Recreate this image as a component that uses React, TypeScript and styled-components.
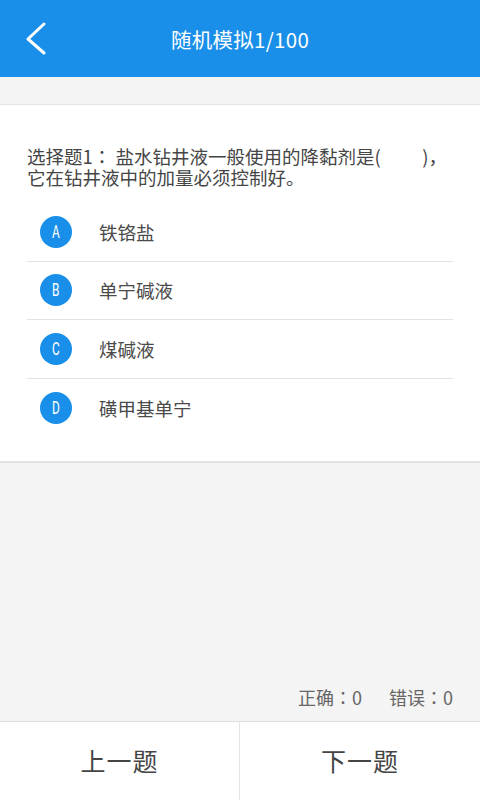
import React from "react";
import styled, { createGlobalStyle } from "styled-components";

const GlobalStyle = createGlobalStyle`
  html, body { margin: 0; padding: 0; background: #f4f4f4; }
  body { font-family: "Noto Sans CJK SC", "Noto Sans", Roboto, sans-serif; }
  * { box-sizing: border-box; }
`;

const Page = styled.div`
  width: 480px;
  height: 800px;
  display: flex;
  flex-direction: column;
  background: #f4f4f4;
  overflow: hidden;
`;

const Header = styled.header`
  height: 77px;
  flex: none;
  background: #1a8fe9;
  display: flex;
  align-items: center;
  justify-content: center;
  position: relative;
`;

const BackButton = styled.button`
  position: absolute;
  left: 20px;
  top: 18px;
  width: 32px;
  height: 42px;
  border: 0;
  padding: 0;
  background: transparent;
  display: flex;
  align-items: center;
  justify-content: center;
`;

const Title = styled.h1`
  margin: 0;
  color: #ffffff;
  font-size: 20.5px;
  font-weight: 400;
  letter-spacing: 0.3px;
  margin-top: 1px;
`;

const Spacer = styled.div`
  height: 27px;
  flex: none;
`;

const Card = styled.section`
  background: #ffffff;
  border-top: 1px solid #e4e4e4;
  border-bottom: 2px solid #e2e2e2;
  padding: 41px 27px 24px;
  flex: none;
`;

const Question = styled.p`
  margin: 0 0 15px;
  font-size: 18.5px;
  line-height: 21px;
  color: #454545;
`;

const Colon = styled.span`
  font-family: "Noto Sans CJK TC", "Noto Sans CJK SC", sans-serif;
`;

const OptionList = styled.ul`
  list-style: none;
  margin: 0;
  padding: 0;
`;

const OptionRow = styled.li<{ $last?: boolean }>`
  height: ${(p) => (p.$last ? "58px" : "58.5px")};
  display: flex;
  align-items: center;
  padding-left: 13px;
  gap: 27px;
  border-bottom: ${(p) => (p.$last ? "none" : "1px solid #e3e3e3")};
`;

const Badge = styled.span`
  width: 32px;
  height: 32px;
  border-radius: 50%;
  background: #1a8fe9;
  color: #ffffff;
  display: flex;
  align-items: center;
  justify-content: center;
  flex: none;
`;

const BadgeLetter = styled.span`
  display: inline-block;
  font-family: Roboto, "Liberation Sans", sans-serif;
  font-size: 18px;
  line-height: 1;
  transform: scaleX(0.66);
`;

const OptionText = styled.span`
  font-size: 18.5px;
  color: #4a4a4a;
`;

const Filler = styled.div`
  flex: 1;
  display: flex;
  flex-direction: column;
  justify-content: flex-end;
  padding: 0 27px 13px;
`;

const Stats = styled.div`
  display: flex;
  justify-content: flex-end;
  gap: 27px;
  font-size: 18px;
  color: #666666;
  line-height: 22px;
`;

const BottomBar = styled.nav`
  height: 79px;
  flex: none;
  background: #ffffff;
  border-top: 1px solid #dedede;
  display: grid;
  grid-template-columns: 1fr 1fr;
`;

const NavButton = styled.button<{ $divider?: boolean }>`
  border: 0;
  background: transparent;
  font-family: "Noto Sans CJK SC", sans-serif;
  font-size: 25px;
  color: #454545;
  border-right: ${(p) => (p.$divider ? "1px solid #e4e4e4" : "none")};
  padding: 0 0 2px;
  letter-spacing: 1px;
`;

const options = [
  { key: "A", text: "铁铬盐" },
  { key: "B", text: "单宁碱液" },
  { key: "C", text: "煤碱液" },
  { key: "D", text: "磺甲基单宁" },
];

const gap = "\u00a0".repeat(10);

export default function App() {
  return (
    <Page>
      <GlobalStyle />
      <Header>
        <BackButton aria-label="返回">
          <svg width="32" height="42" viewBox="0 0 32 42">
            <path
              d="M24 6 L8 21 L24 35"
              fill="none"
              stroke="#ffffff"
              strokeWidth="3"
              strokeLinecap="round"
              strokeLinejoin="round"
            />
          </svg>
        </BackButton>
        <Title>随机模拟1/100</Title>
      </Header>
      <Spacer />
      <Card>
        <Question>
          选择题1<Colon>：</Colon> 盐水钻井液一般使用的降黏剂是({gap})，
          <br />
          它在钻井液中的加量必须控制好。
        </Question>
        <OptionList>
          {options.map((o, i) => (
            <OptionRow key={o.key} $last={i === options.length - 1}>
              <Badge>
                <BadgeLetter>{o.key}</BadgeLetter>
              </Badge>
              <OptionText>{o.text}</OptionText>
            </OptionRow>
          ))}
        </OptionList>
      </Card>
      <Filler>
        <Stats>
          <span>
            正确<Colon>：</Colon>0
          </span>
          <span>
            错误<Colon>：</Colon>0
          </span>
        </Stats>
      </Filler>
      <BottomBar>
        <NavButton $divider>上一题</NavButton>
        <NavButton>下一题</NavButton>
      </BottomBar>
    </Page>
  );
}
